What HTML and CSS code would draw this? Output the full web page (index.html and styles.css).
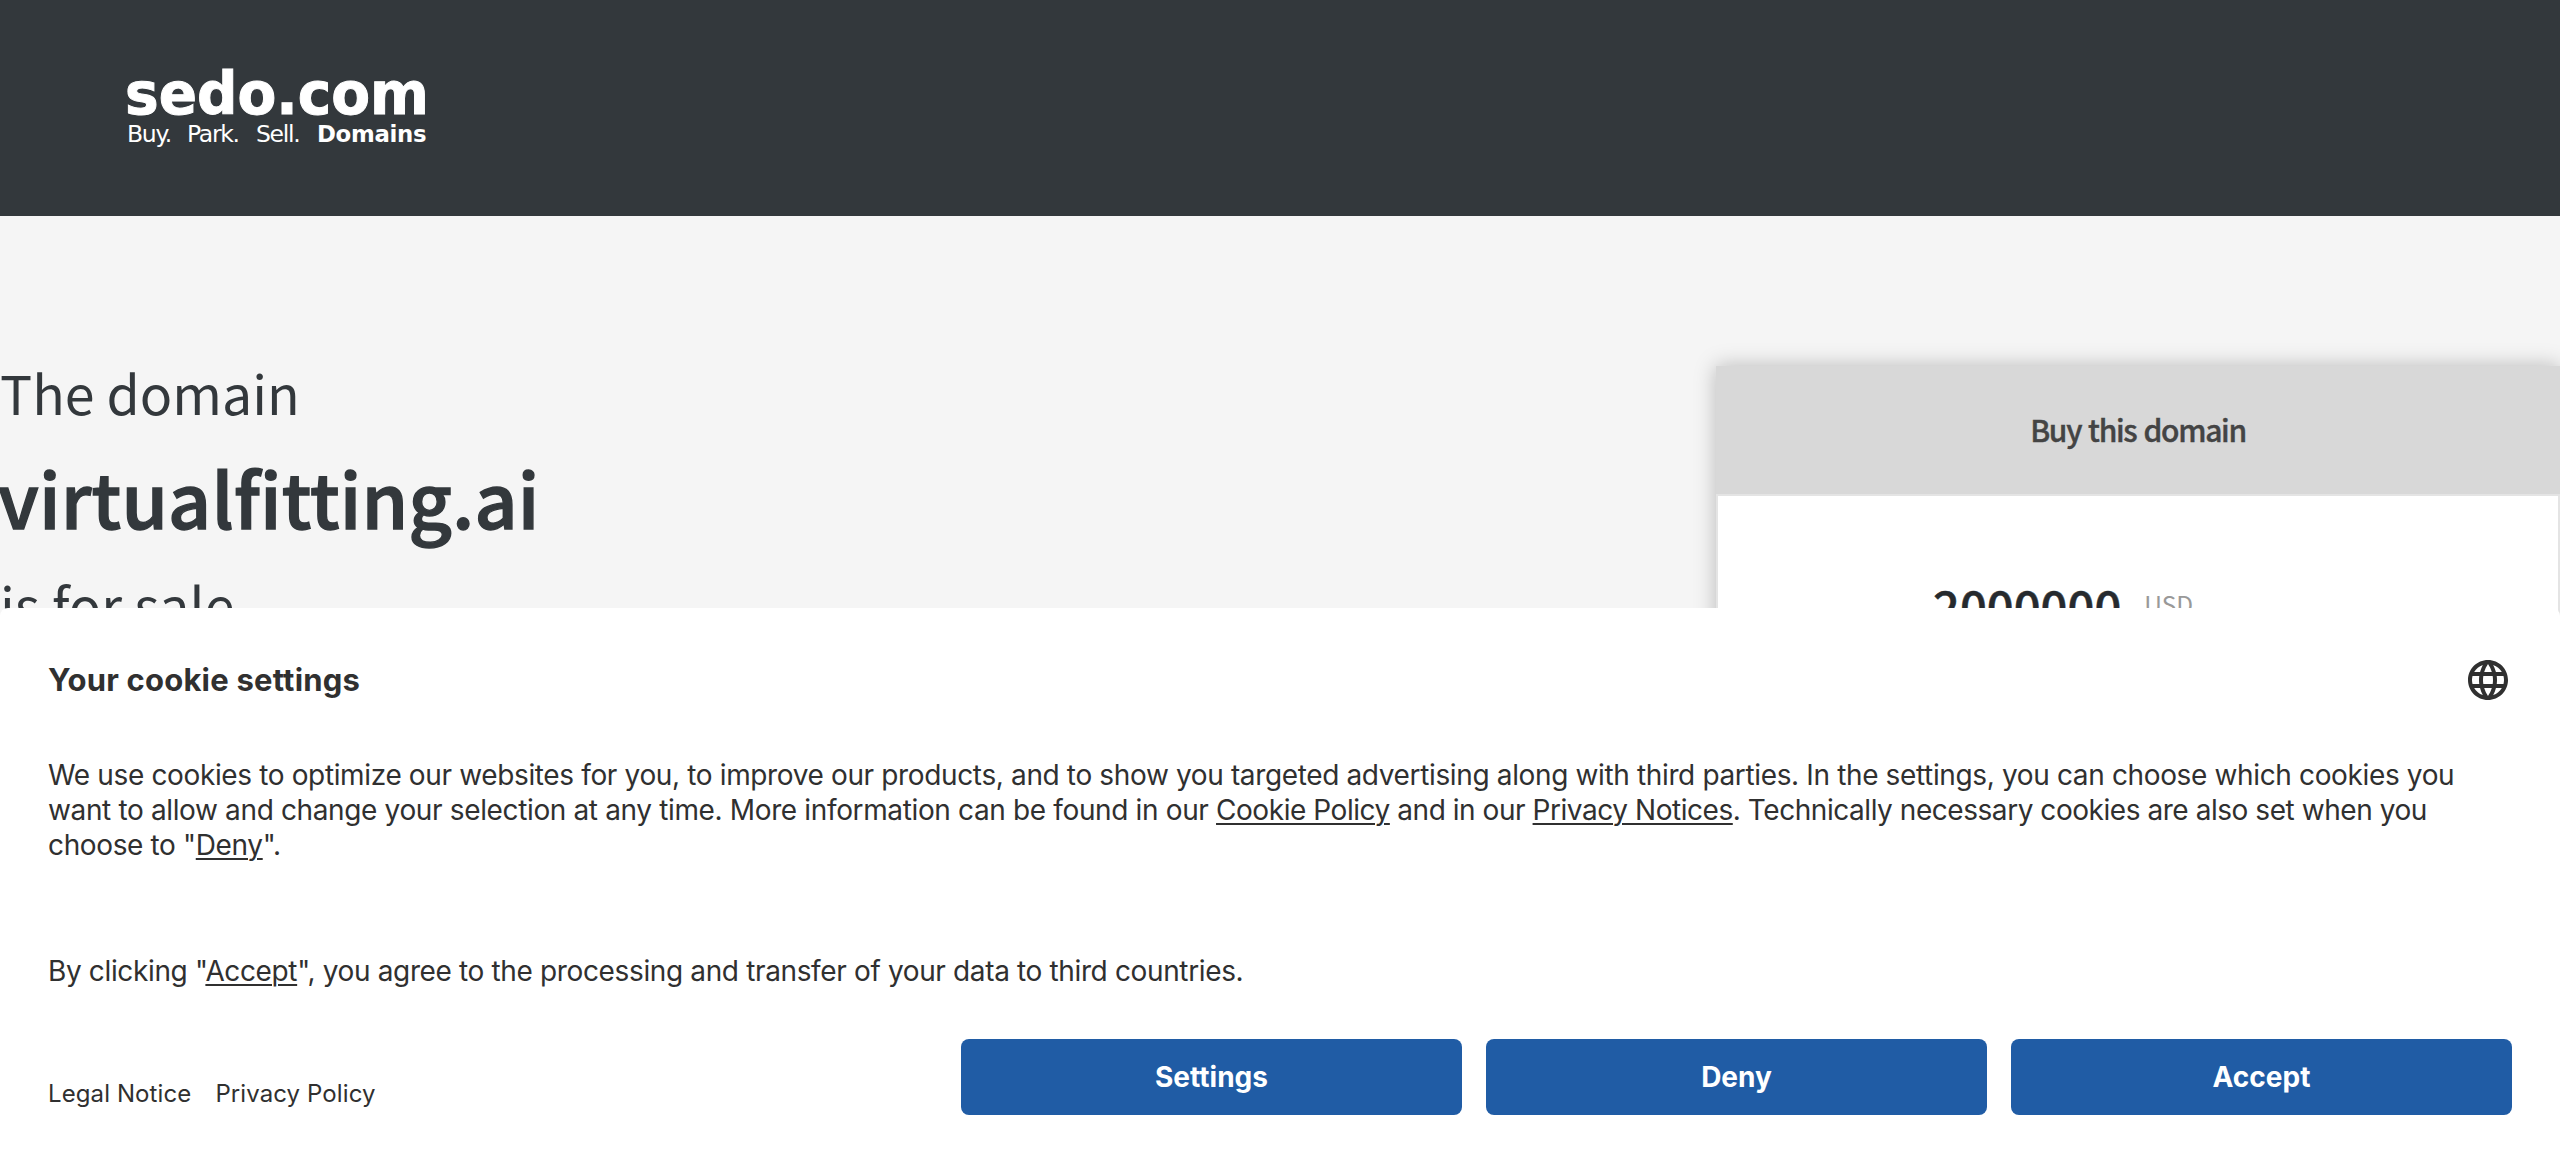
FILE: index.html
```html
<!DOCTYPE html>
<html lang="en">
<head>
<meta charset="utf-8">
<title>virtualfitting.ai is for sale</title>
<link rel="stylesheet" href="styles.css">
</head>
<body>
<header class="site-header">
  <div class="logo">
    <svg class="wordmark" viewBox="0 0 304 54" role="img" aria-label="sedo.com"><text x="-2" y="45" textLength="304" lengthAdjust="spacingAndGlyphs">sedo.com</text></svg>
    <div class="tagline"><span class="buy">Buy.</span><span class="park">Park.</span><span class="sell">Sell.</span><b>Domains</b></div>
  </div>
</header>
<main class="offer">
  <section class="headline">
    <p class="lead">The domain</p>
    <h1 class="domain">virtualfitting.ai</h1>
    <p class="lead">is for sale</p>
  </section>
  <aside class="card">
    <h2 class="card-title">Buy this domain</h2>
    <div class="price"><span class="amount">2000000</span><span class="currency">USD</span></div>
  </aside>
</main>
<section class="cookies">
  <div class="cookie-head">
    <h2>Your cookie settings</h2>
    <svg class="globe" viewBox="2 2 20 20"><path d="M11.99 2C6.47 2 2 6.48 2 12s4.47 10 9.99 10C17.52 22 22 17.52 22 12S17.52 2 11.99 2zm6.93 6h-2.95a15.65 15.65 0 0 0-1.38-3.56A8.03 8.03 0 0 1 18.92 8zM12 4.04c.83 1.2 1.48 2.53 1.91 3.96h-3.82c.43-1.43 1.08-2.76 1.91-3.96zM4.26 14C4.1 13.36 4 12.69 4 12s.1-1.36.26-2h3.38c-.08.66-.14 1.32-.14 2s.06 1.34.14 2H4.26zm.82 2h2.95c.32 1.25.78 2.45 1.38 3.56A7.987 7.987 0 0 1 5.08 16zm2.95-8H5.08a7.987 7.987 0 0 1 4.33-3.56A15.65 15.65 0 0 0 8.03 8zM12 19.96c-.83-1.2-1.48-2.53-1.91-3.96h3.82c-.43 1.43-1.08 2.76-1.91 3.96zM14.34 14H9.66c-.09-.66-.16-1.32-.16-2s.07-1.35.16-2h4.68c.09.65.16 1.32.16 2s-.07 1.34-.16 2zm.25 5.56c.6-1.11 1.06-2.31 1.38-3.56h2.95a8.03 8.03 0 0 1-4.33 3.56zM16.36 14c.08-.66.14-1.32.14-2s-.06-1.34-.14-2h3.38c.16.64.26 1.31.26 2s-.1 1.36-.26 2h-3.38z"/></svg>
  </div>
  <p class="copy first">We use cookies to optimize our websites for you, to improve our products, and to show you targeted advertising along with third parties. In the settings, you can choose which cookies you<br>want to allow and change your selection at any time. More information can be found in our <span class="tight"><a>Cookie Policy</a> and in our <a>Privacy Notices</a>. Technically necessary cookies are also set when you</span><br>choose to "<a>Deny</a>".</p>
  <p class="copy second">By clicking "<a>Accept</a>", you agree to the processing and transfer of your data to third countries.</p>
  <footer class="actions">
    <nav class="links"><a>Legal Notice</a><a>Privacy Policy</a></nav>
    <button>Settings</button><button>Deny</button><button>Accept</button>
  </footer>
</section>
</body>
</html>
```
FILE: styles.css
```css
*{box-sizing:border-box}
body{margin:0;height:1162px;overflow:hidden;background:#f5f5f5;color:#33383c;font-family:"Noto Sans CJK SC","Noto Sans",sans-serif}
h1,h2,p{margin:0}
.site-header{height:216px;padding:69px 127px;background:#33383c}
.logo{width:304px;color:#fff}
.wordmark{display:block;overflow:visible;width:304px;height:54px;fill:#fff;stroke:#fff;stroke-width:1px;font:bold 59px "DejaVu Sans",sans-serif}
.tagline{display:flex;height:24px;margin-top:-2px;font:23.5px/26px "DejaVu Sans",sans-serif;white-space:nowrap;letter-spacing:-1.3px}
.buy{width:60px}
.park{width:69px}
.sell{width:61px}
.tagline b{font-size:22.8px;letter-spacing:-.3px}
.offer{display:flex;justify-content:space-between;height:392px}
.headline{padding-top:132px;white-space:nowrap}
.lead{font-size:53.7px;line-height:88px}
.domain{margin-left:-2px;font-size:75px;line-height:122px;font-weight:500;letter-spacing:.15px;-webkit-text-stroke:1.4px #33383c}
.domain + .lead{padding-top:2px}
.card{width:844px;height:600px;margin-top:150px;background:#fff;border:2px solid #e4e4e4;border-top:0;box-shadow:0 0 20px rgba(0,0,0,.25)}
.card-title{height:130px;margin:0 -2px;background:#d8d8d8;border-bottom:2px solid #e4e4e4;color:#444;text-align:center;font-size:30px;line-height:126px;font-weight:500;letter-spacing:-1.3px;word-spacing:1.5px;-webkit-text-stroke:.4px #444}
.price{display:flex;align-items:flex-start;padding:70px 0 0 215px;color:#262a2e}
.amount{font-size:47.2px;font-weight:500;line-height:80px;-webkit-text-stroke:.5px #262a2e}
.currency{margin-left:23px;font-size:24.5px;line-height:75px;color:#999}
.cookies{position:relative;height:554px;padding:48px;background:#fff;border-radius:8px 8px 0 0;color:#303030;font-family:Inter,sans-serif}
.cookie-head{display:flex;justify-content:space-between;align-items:center;height:48px}
.cookie-head h2{padding-bottom:2px;font-size:31px;font-weight:700;letter-spacing:.2px}
.globe{width:40px;height:40px;margin-right:4px;fill:#303030}
.copy{font-size:28px;line-height:35px;white-space:nowrap;letter-spacing:-.36px}
.copy a{text-decoration:underline;text-underline-offset:3px;text-decoration-thickness:2px}
.tight{letter-spacing:-.45px}
.first{margin-top:54px}
.second{margin-top:91px}
.actions{display:flex;gap:24px;margin-top:50px;height:76px}
.links{display:flex;gap:24px;flex:1;align-self:flex-end;font-size:24px;line-height:42px;letter-spacing:.1px}
button{width:501px;border:0;border-radius:8px;background:#205ca5;color:#fff;font:700 28px Inter,sans-serif}
```
